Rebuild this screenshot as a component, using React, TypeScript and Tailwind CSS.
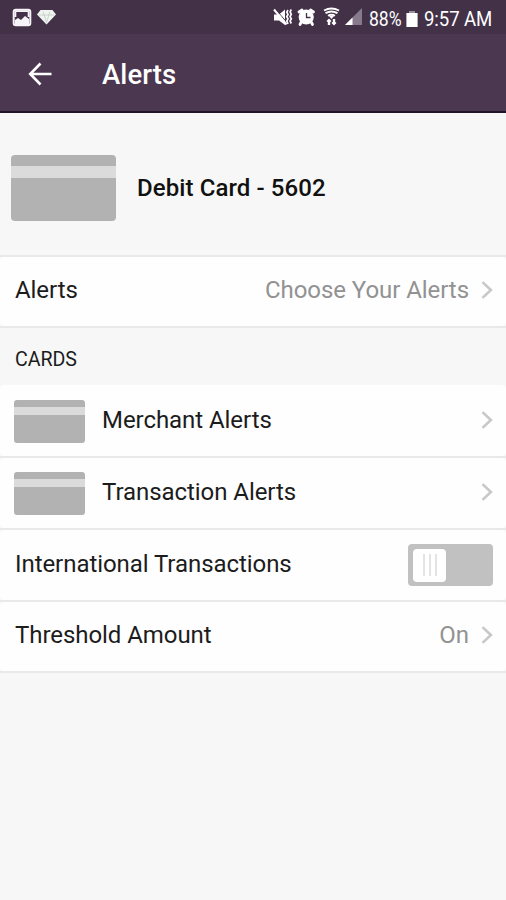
import type { ReactNode } from "react";

function CardArt({ large = false }: { large?: boolean }) {
  return large ? (
    <div className="h-[66px] w-[105px] shrink-0 overflow-hidden rounded-[4px] bg-[#b2b2b2] pt-[11px]">
      <div className="h-3 bg-[#dbdbdb]" />
    </div>
  ) : (
    <div className="-ml-px mt-[3px] h-[43px] w-[71px] shrink-0 overflow-hidden rounded-[3px] bg-[#b2b2b2] pt-[7px]">
      <div className="h-2 bg-[#dbdbdb]" />
    </div>
  );
}

function Chevron() {
  return (
    <svg width="12" height="20" viewBox="0 0 12 20" fill="none" className="block shrink-0">
      <path d="M1.5 2.1 9.9 10l-8.4 7.9" stroke="#c8c8c8" strokeWidth="2.6" />
    </svg>
  );
}

function Row({ height, children }: { height: string; children: ReactNode }) {
  return (
    <div className={`flex items-center rounded-[4px] bg-[#fefefe] pl-[15px] pr-[13px] ${height}`}>
      {children}
    </div>
  );
}

function Divider() {
  return <div className="h-0.5 bg-[#e9e9e9]" />;
}

function StatusBar() {
  return (
    <div className="flex h-[34px] items-center bg-[#433148] pt-[3px] text-white">
      <svg width="60" height="24" viewBox="0 0 60 24" className="shrink-0">
        <rect x="13.7" y="2.7" width="16.6" height="15.6" rx="2" fill="none" stroke="#f7f4f8" strokeWidth="2" />
        <path d="M15 18v-5l3-2 3 2 4-4 4 3v6Z" fill="#f7f4f8" />
        <path d="M15 4.2h14M15.4 5v5M28.6 5v5" stroke="#f7f4f8" strokeWidth="1.8" />
        <path d="M40.5 3h12L56 7.5 46.5 17.5 37 7.5Z" fill="#f0f4f0" />
        <path d="M39 8h15M43 4.5l3.5 11L50 4.5" fill="none" stroke="#b2bdb4" strokeWidth=".6" />
      </svg>
      <svg width="92" height="24" viewBox="272 0 92 24" className="ml-[212px] mt-px shrink-0" fill="none">
        <path d="M274 7.5h5l6-5V18l-6-4.5h-5Z" fill="#fff" />
        <path d="m275.8 2.5 12 14" stroke="#433148" strokeWidth="1" />
        <path d="m274 2.5 12.5 15" stroke="#fff" strokeWidth="2" />
        <path d="m288 3-1.2 2.2 1.2 2.2-1.2 2.2 1.2 2.2-1.2 2.2L288 17M291.3 2.5l-1.2 2.4 1.2 2.3-1.2 2.4 1.2 2.2-1.2 2.3 1.2 2.4" stroke="#fff" strokeWidth="1.7" />
        <circle cx="306.2" cy="10" r="7.6" fill="#fff" />
        <path d="m299 5 3-2M310.5 3l3 2M301 15.5l-1 2M311.5 15.5l1 2" stroke="#fff" strokeWidth="2.8" strokeLinecap="round" />
        <path d="M306.5 6v4.5h4" stroke="#433148" strokeWidth="1.3" />
        <path d="M324 3.5q7.5-4 15 0M325.5 6.2q6-3.4 12 0M328 8.8q3.5-2 7 0" stroke="#fff" strokeWidth="1.9" />
        <path d="M331.5 12 334 9h-5Z" fill="#fff" />
        <path d="M329 18v-5M334 12v5" stroke="#fff" strokeWidth="2.4" />
        <path d="m327 14.5 2-2 2 2M332 15.5l2 2 2-2" stroke="#fff" strokeWidth="1.4" />
        <path d="M345 18 362 1v17Z" fill="#877a8b" />
        <path d="m345 18 7.5-7.5V18Z" fill="#fff" />
      </svg>
      <span className="ml-[5px] w-[34px] whitespace-nowrap text-[20px] leading-6"><span className="inline-block origin-left scale-x-[0.88]">88%</span></span>
      <svg width="14" height="18" viewBox="0 0 14 18" className="ml-[2px] shrink-0">
        <path d="M4 1h6v2h2.6v14H1.4V3H4Z" fill="#fff" />
        <path d="M4 1h6v2H4Z" fill="#99909c" />
      </svg>
      <span className="ml-[5px] inline-block origin-left scale-x-[0.93] whitespace-nowrap text-[20px] leading-6 tracking-[-0.1px]">9:57 AM</span>
    </div>
  );
}

function Toggle() {
  return (
    <div className="ml-auto flex h-[42px] w-[85px] items-center rounded-[4px] bg-[#c1c1c1] pl-[5px]">
      <div className="flex h-[33px] w-[33px] items-center justify-center gap-1 rounded-[4px] bg-white">
        <div className="h-[22px] w-0.5 bg-[#e4e4e4]" />
        <div className="h-[22px] w-0.5 bg-[#e4e4e4]" />
        <div className="h-[22px] w-0.5 bg-[#e4e4e4]" />
      </div>
    </div>
  );
}

export default function App() {
  return (
    <div className="h-[900px] w-[506px] overflow-hidden bg-[#f7f7f7] font-['Roboto',sans-serif] text-[24px] leading-7 tracking-[-0.06px] text-[#1c1c1c]">
      <StatusBar />
      <header className="flex h-[79px] items-center border-b-2 border-[#21142a] bg-[#4c3750] pl-7 text-white">
        <svg width="24" height="24" viewBox="0 0 24 24" fill="none" className="mt-[3px] shrink-0">
          <path d="M12.5 1.5 2.2 12l10.3 10.5M2.2 12H23.5" stroke="white" strokeWidth="2.6" />
        </svg>
        <h1 className="ml-[50px] mt-[5px] text-[27.5px] font-medium tracking-[0.1px]">Alerts</h1>
      </header>

      <section className="flex h-[142px] items-center pl-[11px] pt-[7px]">
        <CardArt large />
        <h2 className="ml-[21px] whitespace-nowrap text-[24px] font-medium tracking-[0.09px] text-[#111]">Debit Card - 5602</h2>
      </section>
      <Divider />
      <Row height="h-[69px] pb-[3px]">
        <span>Alerts</span>
        <span className="ml-auto mr-3 text-[#929292]">Choose Your Alerts</span>
        <Chevron />
      </Row>
      <Divider />

      <div className="flex h-[57px] items-center pl-[15px] pt-[7px] text-[19.6px]">CARDS</div>
      <Row height="h-[71px] pb-[2px]">
        <CardArt />
        <span className="ml-[17px]">Merchant Alerts</span>
        <span className="ml-auto"><Chevron /></span>
      </Row>
      <Divider />
      <Row height="h-[70px] pb-[2px]">
        <CardArt />
        <span className="ml-[17px]">Transaction Alerts</span>
        <span className="ml-auto"><Chevron /></span>
      </Row>
      <Divider />
      <Row height="h-[70px]">
        <span className="-mt-[3px]">International Transactions</span>
        <Toggle />
      </Row>
      <Divider />
      <Row height="h-[69px] pb-[3px]">
        <span>Threshold Amount</span>
        <span className="ml-auto mr-3 text-[#929292]">On</span>
        <Chevron />
      </Row>
      <Divider />
    </div>
  );
}
